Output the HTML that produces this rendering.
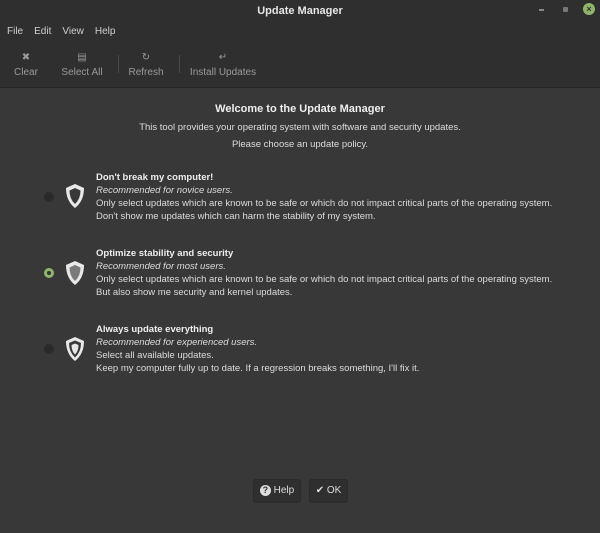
<!DOCTYPE html>
<html><head><style>
body{margin:0;width:600px;height:533px;background:#383838;font-family:"Liberation Sans",sans-serif;color:#dcdcdc;position:relative;overflow:hidden;font-size:9px;white-space:nowrap}
.top{position:absolute;left:0;top:0;width:600px;height:87px;background:#2f2f2f;border-bottom:1px solid #262626}
.title{position:absolute;top:5px;width:600px;text-align:center;font-weight:bold;font-size:11px;color:#e6e6e6}
.menu{position:absolute;top:26px;left:7px;font-size:10px;color:#cfcfcf}
.menu span{margin-right:11px}
.tb{position:absolute;top:50px;text-align:center;font-size:10px;color:#9a9a9a;line-height:15px}
.sep{position:absolute;top:55px;width:1px;height:18px;background:#4a4a4a}
.c{position:absolute;width:600px;text-align:center;font-size:9.5px}
.opt{position:absolute;left:96px;line-height:13px;font-size:9.5px;color:#dcdcdc}
.opt b{color:#eee}
.radio{position:absolute;left:44px;width:10px;height:10px;border-radius:50%;background:#2a2a2a}
.btn{position:absolute;top:479px;height:22px;background:#2f2f2f;border:1px solid #2a2a2a;border-radius:3px;font-size:10px;color:#ddd;line-height:22px;text-align:center}
</style></head><body>
<div class="top">
<div class="title">Update Manager</div>
<div style="position:absolute;left:539px;top:9px;width:5px;height:2px;background:#888"></div>
<div style="position:absolute;left:563px;top:7px;width:5px;height:5px;background:#777;border-radius:1px"></div>
<div style="position:absolute;left:583px;top:3px;width:12px;height:12px;border-radius:50%;background:#8fb56a;color:#333;font-size:9px;line-height:12px;text-align:center;font-weight:bold">×</div>
<div class="menu"><span>File</span><span>Edit</span><span>View</span><span>Help</span></div>
<div class="tb" style="left:6px;width:40px">✖<br>Clear</div>
<div class="tb" style="left:56px;width:52px">▤<br>Select All</div>
<div class="sep" style="left:118px"></div>
<div class="tb" style="left:124px;width:44px">↻<br>Refresh</div>
<div class="sep" style="left:179px"></div>
<div class="tb" style="left:186px;width:74px">↵<br>Install Updates</div>
</div>
<div class="c" style="top:103px;font-weight:bold;font-size:11px;color:#eee">Welcome to the Update Manager</div>
<div class="c" style="top:122px">This tool provides your operating system with software and security updates.</div>
<div class="c" style="top:139px">Please choose an update policy.</div>

<div class="radio" style="top:192px"></div>
<svg style="position:absolute;left:64px;top:183px" width="22" height="26" viewBox="0 0 22 26"><path d="M11 1 L20 5 Q20 18 11 25 Q2 18 2 5 Z" fill="#e8e8e8"/><path d="M11 5 L16.5 7.5 Q16.5 16 11 21 Q5.5 16 5.5 7.5 Z" fill="#383838"/></svg>
<div class="opt" style="top:171px"><b>Don't break my computer!</b><br><i>Recommended for novice users.</i><br>Only select updates which are known to be safe or which do not impact critical parts of the operating system.<br>Don't show me updates which can harm the stability of my system.</div>

<div class="radio" style="top:268px;background:#8fb56a"></div>
<div style="position:absolute;left:47px;top:271px;width:4px;height:4px;border-radius:50%;background:#333"></div>
<svg style="position:absolute;left:64px;top:260px" width="22" height="26" viewBox="0 0 22 26"><path d="M11 1 L20 5 Q20 18 11 25 Q2 18 2 5 Z" fill="#e8e8e8"/><path d="M11 5 L16.5 7.5 Q16.5 16 11 21 Q5.5 16 5.5 7.5 Z" fill="#7a7a7a"/></svg>
<div class="opt" style="top:247px"><b>Optimize stability and security</b><br><i>Recommended for most users.</i><br>Only select updates which are known to be safe or which do not impact critical parts of the operating system.<br>But also show me security and kernel updates.</div>

<div class="radio" style="top:344px"></div>
<svg style="position:absolute;left:64px;top:336px" width="22" height="26" viewBox="0 0 22 26"><path d="M11 1 L20 5 Q20 18 11 25 Q2 18 2 5 Z" fill="#e8e8e8"/><path d="M11 4.5 L17 7 Q17 16 11 21.5 Q5 16 5 7 Z" fill="#383838"/><path d="M11 7.5 L14.5 9 Q14.5 15 11 18.5 Q7.5 15 7.5 9 Z" fill="#e8e8e8"/></svg>
<div class="opt" style="top:323px"><b>Always update everything</b><br><i>Recommended for experienced users.</i><br>Select all available updates.<br>Keep my computer fully up to date. If a regression breaks something, I'll fix it.</div>

<div class="btn" style="left:253px;width:46px"><span style="display:inline-block;width:11px;height:11px;border-radius:50%;background:#ddd;color:#333;font-size:9px;line-height:11px;font-weight:bold;vertical-align:middle">?</span> Help</div>
<div class="btn" style="left:309px;width:37px">✔ OK</div>
</body></html>
